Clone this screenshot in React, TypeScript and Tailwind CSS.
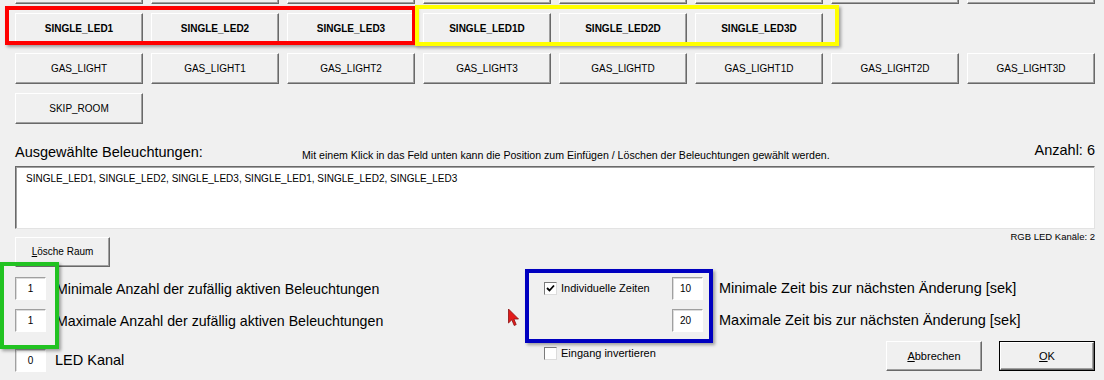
import React from "react";

const btnBase =
  "flex items-center justify-center bg-[#f0f0f0] border border-t-white border-l-white border-r-[#696969] border-b-[#696969] shadow-[inset_-1px_-1px_0_#a0a0a0] text-[10px] text-black leading-none whitespace-nowrap";

const sunken =
  "bg-white border border-t-[#a0a0a0] border-l-[#a0a0a0] border-r-white border-b-white shadow-[inset_1px_1px_0_#dcdcdc]";

function Btn({ label, bold }: { label?: string; bold?: boolean }) {
  return <div className={bold ? btnBase + " font-bold" : btnBase}>{label}</div>;
}

function Check({ checked }: { checked?: boolean }) {
  return (
    <div className="w-[13px] h-[13px] bg-white border border-t-[#7a7a7a] border-l-[#7a7a7a] border-r-[#dcdcdc] border-b-[#dcdcdc] flex items-center justify-center">
      {checked ? (
        <svg width="9" height="9" viewBox="0 0 9 9">
          <path d="M1 4 L3.5 6.5 L8 1.5" fill="none" stroke="#000" strokeWidth="1.8" />
        </svg>
      ) : null}
    </div>
  );
}

function NumBox({ value, className }: { value: string; className?: string }) {
  return (
    <div
      className={
        sunken +
        " w-[31px] h-[23px] flex items-center justify-center text-[10px] leading-none " +
        (className ?? "")
      }
    >
      {value}
    </div>
  );
}

export default function App() {
  const row2 = ["SINGLE_LED1", "SINGLE_LED2", "SINGLE_LED3", "SINGLE_LED1D", "SINGLE_LED2D", "SINGLE_LED3D"];
  const row3 = [
    "GAS_LIGHT",
    "GAS_LIGHT1",
    "GAS_LIGHT2",
    "GAS_LIGHT3",
    "GAS_LIGHTD",
    "GAS_LIGHT1D",
    "GAS_LIGHT2D",
    "GAS_LIGHT3D",
  ];
  return (
    <div className="relative w-[1104px] h-[380px] overflow-hidden bg-[#f0f0f0] text-black font-['Liberation_Sans',Arial,sans-serif]">
      <div className="flex flex-col pl-[15px] pr-[9px]">
        {/* button grid */}
        <div className="-mt-[27px] grid grid-cols-[repeat(8,128px)] auto-rows-[31px] gap-x-2 gap-y-[9px]">
          {Array.from({ length: 8 }).map((_, i) => (
            <Btn key={"r1" + i} />
          ))}
          {row2.map((l) => (
            <Btn key={l} label={l} bold />
          ))}
          <div />
          <div />
          {row3.map((l) => (
            <Btn key={l} label={l} />
          ))}
          <Btn label="SKIP_ROOM" />
        </div>

        {/* header */}
        <div className="h-[42px] flex items-end pb-[6px]">
          <div className="w-[287px] text-[14.5px] leading-[16px]">Ausgewählte Beleuchtungen:</div>
          <div className="text-[10.6px] leading-[12px] -mb-[1px]">
            Mit einem Klick in das Feld unten kann die Position zum Einfügen / Löschen der Beleuchtungen gewählt werden.
          </div>
          <div className="ml-auto text-[14.5px] leading-[16px] mb-[2px]">Anzahl: 6</div>
        </div>

        {/* list */}
        <div className="h-[63px] bg-white border border-t-[#696969] border-l-[#696969] border-r-[#e3e3e3] border-b-[#e3e3e3] shadow-[inset_1px_1px_0_#a0a0a0] px-[10px] pt-[6px] text-[10px] leading-[12px]">
          SINGLE_LED1, SINGLE_LED2, SINGLE_LED3, SINGLE_LED1, SINGLE_LED2, SINGLE_LED3
        </div>

        <div className="h-[38px] flex items-start justify-between">
          <div className={btnBase + " mt-[8px] w-[95px] h-[30px]"}>
            <span>
              <span className="underline">L</span>ösche Raum
            </span>
          </div>
          <div className="mt-[2px] text-[9.5px] leading-[12px]">RGB LED Kanäle: 2</div>
        </div>

        {/* bottom */}
        <div className="h-[113px] flex">
          <div className="w-[510px] flex flex-col pt-[10px]">
            <div className="h-[23px] flex items-center">
              <NumBox value="1" />
              <span className="ml-[10px] text-[14.2px] leading-[16px]">Minimale Anzahl der zufällig aktiven Beleuchtungen</span>
            </div>
            <div className="mt-[9px] h-[23px] flex items-center">
              <NumBox value="1" />
              <span className="ml-[10px] text-[14.2px] leading-[16px]">Maximale Anzahl der zufällig aktiven Beleuchtungen</span>
            </div>
            <div className="mt-[17px] h-[23px] flex items-center">
              <NumBox value="0" />
              <span className="ml-[9px] text-[14.5px] leading-[16px] -mt-[2px]">LED Kanal</span>
            </div>
          </div>

          <div className="flex-1 flex flex-col pt-[10px]">
            <div className="h-[23px] flex items-center">
              <div className="w-[147px] pl-[19px] flex items-center">
                <Check checked />
                <span className="ml-[4px] text-[11px] leading-[13px]">Individuelle Zeiten</span>
              </div>
              <NumBox value="10" className="pr-[4px]" />
              <span className="ml-[16px] text-[14.5px] leading-[16px] -mt-[2px]">Minimale Zeit bis zur nächsten Änderung [sek]</span>
            </div>
            <div className="mt-[9px] h-[23px] flex items-center">
              <div className="w-[147px]" />
              <NumBox value="20" className="pr-[4px]" />
              <span className="ml-[16px] text-[14.5px] leading-[16px] -mt-[2px]">Maximale Zeit bis zur nächsten Änderung [sek]</span>
            </div>
            <div className="mt-[9px] flex items-start">
              <div className="w-[147px] pl-[19px] pt-[6px] flex items-center">
                <Check />
                <span className="ml-[4px] text-[11px] leading-[13px]">Eingang invertieren</span>
              </div>
              <div className="ml-auto flex gap-[17px]">
                <div className={btnBase + " w-[96px] h-[30px] text-[11px]"}>
                  <span>
                    <span className="underline">A</span>bbrechen
                  </span>
                </div>
                <div className="w-[96px] h-[30px] border border-black flex">
                  <div className={btnBase + " flex-1 text-[11px]"}>
                    <span className="underline">O</span>K
                  </div>
                </div>
              </div>
            </div>
          </div>
        </div>
      </div>

      {/* annotation frames */}
      <div className="pointer-events-none absolute left-[5px] top-[6px] w-[411px] h-[39px] border-4 border-[#ff0000] shadow-[2px_2px_3px_rgba(0,0,0,0.35)]" />
      <div className="pointer-events-none absolute left-[415px] top-[5px] w-[424px] h-[41px] border-4 border-[#ffff00] shadow-[2px_2px_3px_rgba(0,0,0,0.35)]" />
      <div className="pointer-events-none absolute left-0 top-[262px] w-[59px] h-[87px] border-4 border-[#22c322] shadow-[2px_2px_3px_rgba(0,0,0,0.35)]" />
      <div className="pointer-events-none absolute left-[525px] top-[269px] w-[188px] h-[74px] border-4 border-[#0000c0] shadow-[2px_2px_3px_rgba(0,0,0,0.35)]" />

      {/* mouse cursor */}
      <svg className="pointer-events-none absolute left-[507px] top-[308px]" width="14" height="20" viewBox="0 0 14 20">
        <path d="M1.5 1 L1.5 15 L4.8 11.8 L7.2 17.5 L9.2 16.6 L6.9 11 L11.5 11 Z" fill="#e31b1b" stroke="#8a1010" strokeWidth="0.8" />
      </svg>
    </div>
  );
}
